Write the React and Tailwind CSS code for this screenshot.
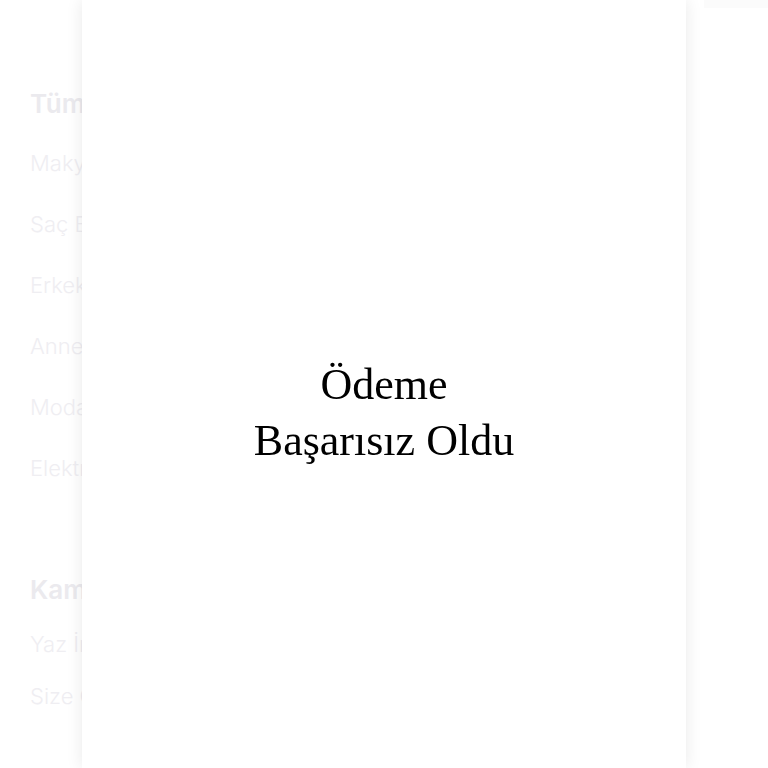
import React from 'react';

const categories = ['Makyaj', 'Saç Bakımı', 'Erkek Bakım', 'Anne & Bebek', 'Moda', 'Elektronik'];
const campaigns = ['Yaz İndirimi', 'Size Özel'];

const Sidebar = () => (
  <aside className="w-[260px] shrink-0 pl-[30px] pt-[75px] text-[#efeef2]" style={{ fontFamily: 'Inter, "Noto Sans", sans-serif' }}>
    <div className="text-[26px] font-semibold leading-[58px] text-[#ebeaee]">Tüm Kategoriler</div>
    {categories.map((c) => (
      <div key={c} className="text-[22px] font-light leading-[61px]">{c}</div>
    ))}
    <div className="mt-[63px] text-[26px] font-semibold leading-[56px] text-[#ebeaee]">Kampanyalar</div>
    {campaigns.map((c) => (
      <div key={c} className="text-[22px] font-light leading-[52px]">{c}</div>
    ))}
  </aside>
);

const App = () => {
  return (
    <div className="relative h-[768px] w-full overflow-hidden bg-white">
      <div className="flex h-full">
        <Sidebar />
        <main className="flex-1">
          <div className="ml-auto h-2 w-[64px] bg-[#fbfbfb]" />
        </main>
      </div>

      <div className="fixed inset-0 flex justify-center">
        <div className="flex h-full w-[604px] items-center justify-center bg-white pt-[58px] shadow-[0_0_16px_rgba(0,0,0,0.09)]">
          <p
            className="text-center text-[44px] leading-[56px] text-black"
            style={{ fontFamily: '"Liberation Serif", "Times New Roman", serif' }}
          >
            Ödeme
            <br />
            Başarısız Oldu
          </p>
        </div>
      </div>
    </div>
  );
};

export default App;
